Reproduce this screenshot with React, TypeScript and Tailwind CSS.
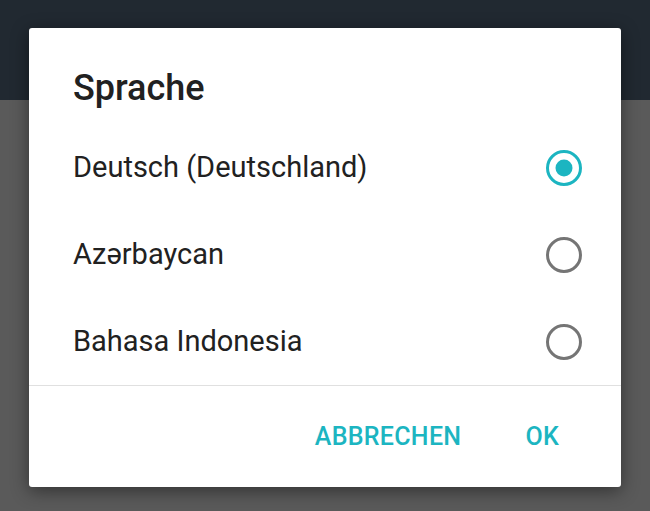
const options = ['Deutsch (Deutschland)', 'Azərbaycan', 'Bahasa Indonesia'];

function Radio({ checked }: { checked: boolean }) {
  return (
    <svg width="38" height="38" viewBox="0 0 38 38">
      <circle cx="19" cy="19" r="16.5" fill="none" stroke={checked ? '#1cb5c1' : '#757575'} strokeWidth="3" />
      {checked && <circle cx="19" cy="19" r="8.5" fill="#1cb5c1" />}
    </svg>
  );
}

export default function App() {
  return (
    <div className="relative h-[511px] w-[650px] overflow-hidden font-['Roboto',sans-serif]">
      <div className="flex h-full flex-col">
        <div className="h-[100px] bg-[#212931]" />
        <div className="flex-1 bg-[#5a5a5a]" />
      </div>

      <div className="absolute left-[29px] top-[28px] flex h-[459px] w-[592px] flex-col rounded-[3px] bg-white shadow-[0_4px_18px_rgba(0,0,0,0.45)]">
        <h2 className="pl-[44px] pt-[40px] text-[36px] font-medium leading-[40px] text-[#212121]">Sprache</h2>
        <div className="mt-[16px] flex flex-col">
          {options.map((label, i) => (
            <div key={label} className="flex h-[87px] items-center justify-between pl-[44px] pr-[38px]">
              <span className="text-[29px] leading-none text-[#212121]">{label}</span>
              <Radio checked={i === 0} />
            </div>
          ))}
        </div>
        <div className="h-px bg-[#e0e0e0]" />
        <div className="flex flex-1 items-center justify-end gap-[32px] pr-[46px]">
          <button className="px-4 text-[25px] font-medium leading-none tracking-[0.3px] text-[#1cb5c1]">ABBRECHEN</button>
          <button className="px-4 text-[25px] font-medium leading-none tracking-[0.3px] text-[#1cb5c1]">OK</button>
        </div>
      </div>
    </div>
  );
}
